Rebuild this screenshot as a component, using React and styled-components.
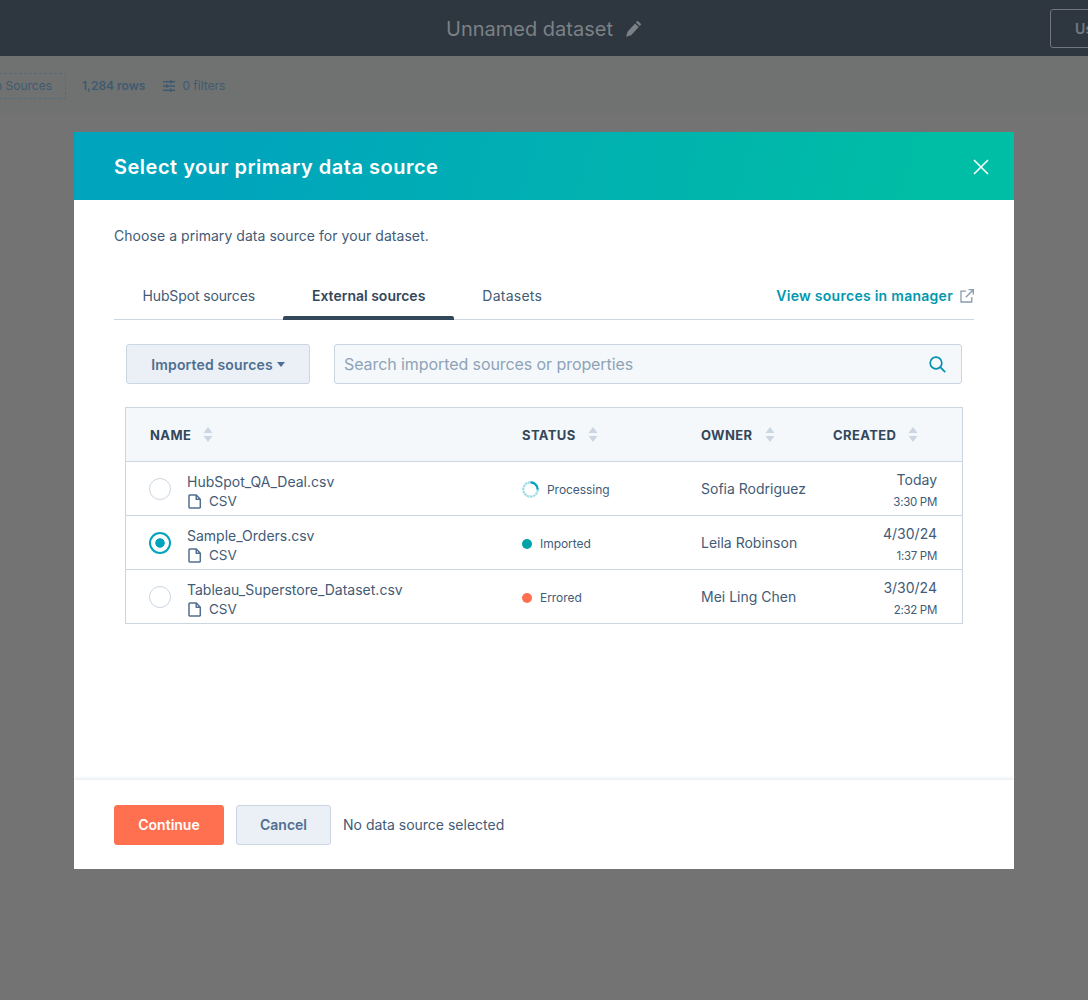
import React from 'react'
import styled, { createGlobalStyle } from 'styled-components'

const Global = createGlobalStyle`
  html, body { margin: 0; padding: 0; }
  body { font-family: Inter, "Liberation Sans", sans-serif; color: #425b76; background: #737373; }
`

const Page = styled.div`
  position: relative;
  width: 1088px;
  height: 1000px;
  overflow: hidden;
  background: #737373;
`
const TopBar = styled.header`
  height: 56px;
  background: #2e3740;
  display: grid;
  grid-template-columns: minmax(0, 1fr) auto minmax(0, 1fr);
  align-items: center;
`
const TitleWrap = styled.div`
  grid-column: 2;
  padding-top: 2px;
  display: flex;
  align-items: center;
  gap: 12px;
  color: #7b8185;
  font-size: 20px;
`
const TopAction = styled.div`
  grid-column: 3;
  justify-self: start;
  margin-left: 408px;
  flex: none;
  width: 80px;
  height: 39px;
  box-sizing: border-box;
  border: 1px solid #70767b;
  border-radius: 3px;
  padding: 0 24px;
  line-height: 37px;
  font-size: 14px;
  font-weight: 600;
  color: #737a80;
`
const SubBar = styled.div`
  height: 57px;
  box-sizing: border-box;
  padding-top: 2px;
  background: #707271;
  display: flex;
  align-items: center;
  font-size: 12px;
  color: #3f5a70;
`
const SourcesBtn = styled.div`
  width: 104px;
  margin-left: -38px;
  height: 26px;
  box-sizing: border-box;
  border: 1px dashed #4f6c82;
  border-radius: 2px;
  line-height: 24px;
  text-align: right;
  padding-right: 13px;
  margin-right: 16px;
`
const RowCount = styled.strong`
  font-weight: 600;
  margin-right: 18px;
`
const FilterCount = styled.span`
  display: flex;
  align-items: center;
  gap: 7px;
`
const Overlay = styled.div`
  position: absolute;
  inset: 0;
  display: flex;
  justify-content: center;
  align-items: flex-start;
  padding-top: 132px;
`
const Modal = styled.section`
  width: 940px;
  height: 737px;
  background: #fff;
  overflow: hidden;
  display: flex;
  flex-direction: column;
`
const ModalHead = styled.div`
  height: 68px;
  flex: none;
  box-sizing: border-box;
  padding: 2px 25px 0 40px;
  display: flex;
  align-items: center;
  justify-content: space-between;
  background: linear-gradient(105deg, #00a4bd 15%, #00bda5 90%);
  color: #fff;
`
const ModalTitle = styled.h2`
  margin: 0;
  font-size: 20px;
  font-weight: 600;
  letter-spacing: 0.5px;
`
const ModalBody = styled.div`
  flex: 1;
  padding: 27px 40px 0;
`
const Lead = styled.p`
  margin: 0 0 27px;
  font-size: 14px;
  line-height: 18px;
  letter-spacing: 0.05px;
`
const Tabs = styled.nav`
  height: 48px;
  box-sizing: border-box;
  border-bottom: 1px solid #cbd6e2;
  display: flex;
  justify-content: space-between;
`
const TabList = styled.div`
  display: flex;
`
const Tab = styled.div`
  position: relative;
  padding: 0 28.5px;
  height: 47px;
  line-height: 48px;
  font-size: 14px;
  letter-spacing: ${p => p.$spacing || 0}px;
  font-weight: ${p => (p.$active ? 600 : 400)};
  color: ${p => (p.$active ? '#33475b' : '#425b76')};
  ${p => p.$active && `
    &::after {
      content: '';
      position: absolute;
      left: 0;
      right: 0;
      bottom: -1px;
      height: 4px;
      border-radius: 2px 2px 0 0;
      background: #33475b;
    }
  `}
`
const ManagerLink = styled.a`
  display: flex;
  align-items: center;
  gap: 7px;
  height: 47px;
  font-size: 14px;
  font-weight: 600;
  letter-spacing: 0.27px;
  color: #0098ae;
`
const Filters = styled.div`
  margin: 24px 12px 23px;
  display: flex;
  gap: 24px;
`
const SelectBtn = styled.div`
  width: 184px;
  height: 40px;
  flex: none;
  box-sizing: border-box;
  background: #eaf0f6;
  border: 1px solid #cbd6e2;
  border-radius: 3px;
  display: flex;
  align-items: center;
  justify-content: center;
  gap: 4px;
  font-size: 14px;
  font-weight: 600;
  letter-spacing: 0.15px;
  color: #506e91;
`
const Caret = styled.span`
  width: 0;
  height: 0;
  margin-top: 1px;
  border-left: 4.5px solid transparent;
  border-right: 4.5px solid transparent;
  border-top: 5px solid #506e91;
`
const SearchBox = styled.div`
  flex: 1;
  height: 40px;
  box-sizing: border-box;
  background: #f5f8fa;
  border: 1px solid #cbd6e2;
  border-radius: 3px;
  padding: 0 15px 0 9px;
  display: flex;
  align-items: center;
  justify-content: space-between;
  font-size: 16px;
  letter-spacing: -0.08px;
  color: #8ea3b8;
`
const Table = styled.div`
  margin: 0 11px;
  border: 1px solid #cbd6e2;
`
const Row = styled.div`
  display: grid;
  grid-template-columns: 372px 179px 132px 1fr;
  align-items: center;
  height: 54px;
  box-sizing: border-box;
  border-top: 1px solid #cbd6e2;
  font-size: 14px;
`
const HeadRow = styled(Row)`
  border-top: 0;
  height: 53px;
  background: #f5f8fa;
  font-size: 13px;
  font-weight: 700;
  letter-spacing: 0.4px;
  color: #33475b;
`
const HeadCell = styled.div`
  padding-left: 24px;
  display: flex;
  align-items: center;
  gap: 12px;
`
const NameCell = styled.div`
  padding-left: 23px;
  display: flex;
  align-items: center;
  gap: 16px;
`
const Radio = styled.span`
  width: 22px;
  height: 22px;
  flex: none;
  box-sizing: border-box;
  border-radius: 50%;
  border: ${p => (p.$on ? '2px solid #00a4bd' : '1px solid #cbd6e2')};
  background: ${p => (p.$on ? 'radial-gradient(circle, #00a4bd 0 4.4px, #fff 5px)' : '#fff')};
`
const NameText = styled.div`
  line-height: 19px;
  margin-top: 6px;
`
const FileLine = styled.div`
  display: flex;
  align-items: center;
  gap: 7px;
  margin: 1px 0 0 1px;
  font-size: 13.5px;
`
const StatusCell = styled.div`
  padding: 2px 0 0 24px;
  display: flex;
  align-items: center;
  gap: 8px;
  font-size: 12px;
  letter-spacing: -0.05px;
`
const Dot = styled.span`
  width: 10px;
  height: 10px;
  border-radius: 50%;
  background: ${p => p.$color};
`
const OwnerCell = styled.div`
  padding-left: 24px;
`
const CreatedCell = styled.div`
  padding: 5px 25px 0 0;
  text-align: right;
  line-height: 21px;
`
const CreatedTime = styled.div`
  margin-top: 2px;
  font-size: 11.5px;
  letter-spacing: -0.3px;
`
const Footer = styled.footer`
  height: 89px;
  flex: none;
  box-sizing: border-box;
  padding: 0 40px;
  display: flex;
  align-items: center;
  gap: 12px;
  background: #fff;
  box-shadow: 0 -2px 3px rgba(203, 214, 226, 0.4);
  font-size: 14px;
`
const Button = styled.div`
  height: 40px;
  box-sizing: border-box;
  width: ${p => p.$w}px;
  line-height: 38px;
  text-align: center;
  border-radius: 3px;
  font-weight: 600;
  font-size: 14px;
  border: 1px solid ${p => (p.$primary ? '#ff7050' : '#cbd6e2')};
  background: ${p => (p.$primary ? '#ff7050' : '#eaf0f6')};
  color: ${p => (p.$primary ? '#fff' : '#506e91')};
`

const Sort = () => (
  <svg width="10" height="15" viewBox="0 0 10 15" fill="#cbd6e2">
    <path d="M5 0l4.5 6h-9zM5 15L.5 9h9z" />
  </svg>
)

const FileIcon = () => (
  <svg width="14" height="15" viewBox="0 0 14 15" fill="none" stroke="#516f90" strokeWidth="1.5" strokeLinejoin="round">
    <path d="M1.7 1h6.6l4 4.2v8.1a.7.7 0 0 1-.7.7H1.7a.7.7 0 0 1-.7-.7V1.7a.7.7 0 0 1 .7-.7zM8.2 1v4.3h4.1" />
  </svg>
)

const Spinner = () => (
  <svg width="17" height="17" viewBox="0 0 17 17" fill="none" strokeWidth="2.2">
    <circle cx="8.5" cy="8.5" r="7.2" stroke="#9fdbe5" strokeDasharray="2.5 0.6" />
    <path d="M8.5 1.3a7.2 7.2 0 0 1 7.2 7.2" stroke="#00a4bd" />
  </svg>
)

const rows = [
  { name: 'HubSpot_QA_Deal.csv', status: 'Processing', owner: 'Sofia Rodriguez', date: 'Today', time: '3:30 PM' },
  { name: 'Sample_Orders.csv', status: 'Imported', color: '#00a4a6', owner: 'Leila Robinson', date: '4/30/24', time: '1:37 PM', on: true },
  { name: 'Tableau_Superstore_Dataset.csv', status: 'Errored', color: '#ff7050', owner: 'Mei Ling Chen', date: '3/30/24', time: '2:32 PM' },
]

const App = () => (
  <Page>
    <Global />
    <TopBar>
      <TitleWrap>
        Unnamed dataset
        <svg width="17" height="18" viewBox="0 0 17 18" fill="#7b8185">
          <path d="M12.6.8l3.7 3.4-1.6 1.8L11 2.6zM10.1 3.5l3.7 3.4-7.7 8.3-5 1.6 1.4-5z" />
        </svg>
      </TitleWrap>
      <TopAction>Use</TopAction>
    </TopBar>
    <SubBar>
      <SourcesBtn>Join Sources</SourcesBtn>
      <RowCount>1,284 rows</RowCount>
      <FilterCount>
        <svg width="12" height="12" viewBox="0 0 12 12" fill="#3f5a70">
          <path d="M0 1h12v1.4H0zM0 5.3h12v1.4H0zM0 9.6h12V11H0zM7 0h1.6v3.4H7zM3 4.3h1.6v3.4H3zM7 8.6h1.6V12H7z" />
        </svg>
        0 filters
      </FilterCount>
    </SubBar>
    <Overlay>
      <Modal>
        <ModalHead>
          <ModalTitle>Select your primary data source</ModalTitle>
          <svg width="16" height="16" viewBox="0 0 16 16" stroke="#fff" strokeWidth="1.6" fill="none">
            <path d="M1 1l14 14M15 1L1 15" />
          </svg>
        </ModalHead>
        <ModalBody>
          <Lead>Choose a primary data source for your dataset.</Lead>
          <Tabs>
            <TabList>
              <Tab $spacing={-0.13}>HubSpot sources</Tab>
              <Tab $active>External sources</Tab>
              <Tab $spacing={0.25}>Datasets</Tab>
            </TabList>
            <ManagerLink>
              View sources in manager
              <svg width="14" height="14" viewBox="0 0 14 14" fill="none" stroke="#8a9bad" strokeWidth="1.3">
                <path d="M6 2.2H1v10.8h10.8V8M8.6.7h4.7v4.7M13.3.7L5.8 8.2" />
              </svg>
            </ManagerLink>
          </Tabs>
          <Filters>
            <SelectBtn>Imported sources <Caret /></SelectBtn>
            <SearchBox>
              Search imported sources or properties
              <svg width="17" height="17" viewBox="0 0 17 17" fill="none" stroke="#0091ae" strokeWidth="1.7">
                <circle cx="7" cy="7" r="5.8" />
                <path d="M11.2 11.2l5 5" />
              </svg>
            </SearchBox>
          </Filters>
          <Table>
            <HeadRow>
              <HeadCell>NAME <Sort /></HeadCell>
              <HeadCell>STATUS <Sort /></HeadCell>
              <HeadCell>OWNER <Sort /></HeadCell>
              <HeadCell>CREATED <Sort /></HeadCell>
            </HeadRow>
            {rows.map(r => (
              <Row key={r.name}>
                <NameCell>
                  <Radio $on={r.on} />
                  <NameText>
                    {r.name}
                    <FileLine><FileIcon /> CSV</FileLine>
                  </NameText>
                </NameCell>
                <StatusCell>
                  {r.color ? <Dot $color={r.color} /> : <Spinner />}
                  {r.status}
                </StatusCell>
                <OwnerCell>{r.owner}</OwnerCell>
                <CreatedCell>
                  {r.date}
                  <CreatedTime>{r.time}</CreatedTime>
                </CreatedCell>
              </Row>
            ))}
          </Table>
        </ModalBody>
        <Footer>
          <Button $primary $w={110}>Continue</Button>
          <Button $w={95}>Cancel</Button>
          No data source selected
        </Footer>
      </Modal>
    </Overlay>
  </Page>
)

export default App
